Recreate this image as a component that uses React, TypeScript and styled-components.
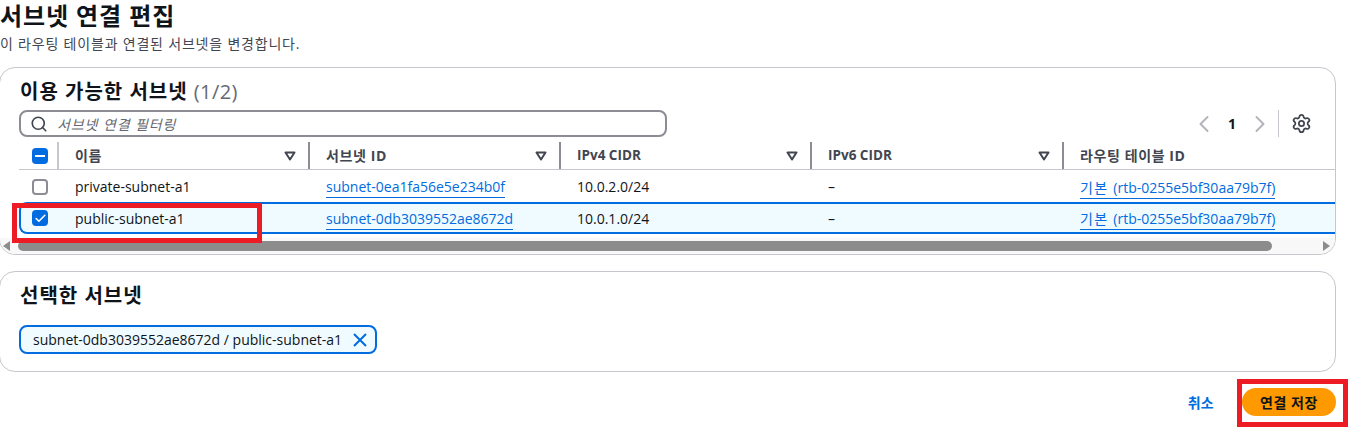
import styled, { createGlobalStyle } from "styled-components";
import { ChevronLeft, ChevronRight, Search, Settings, Check } from "lucide-react";

const GlobalStyle = createGlobalStyle`
  html, body { margin: 0; padding: 0; background: #fff; overflow: hidden; }
  body {
    font-family: "Open Sans", "Noto Sans CJK KR", sans-serif;
    font-size: 14px;
    color: #0f141a;
  }
`;

const Page = styled.div`
  position: relative;
  width: 1349px;
  height: 438px;
  overflow: hidden;
  padding: 1px 13px 0 0;
  box-sizing: border-box;
`;

const Title = styled.h1`
  margin: 0;
  font-size: 24px;
  line-height: 30px;
  font-weight: 700;
  letter-spacing: 0.9px;
`;

const Description = styled.p`
  margin: 4px 0 14px;
  font-size: 14px;
  line-height: 18px;
  letter-spacing: 0.8px;
  color: #424650;
`;

const Card = styled.section`
  margin-left: -1px;
  border: 1px solid #c6c6cd;
  border-radius: 16px;
  overflow: hidden;
  background: #fff;
  & + & { margin-top: 16px; }
`;

const CardHeading = styled.h2`
  margin: 0;
  padding: 11px 20px 0;
  font-size: 20px;
  line-height: 26px;
  font-weight: 700;
  letter-spacing: 1px;
`;

const Counter = styled.span`
  font-weight: 400;
  color: #656871;
  letter-spacing: 0.4px;
`;

const Toolbar = styled.div`
  display: flex;
  align-items: center;
  padding: 5px 23px 0 19px;
`;

const SearchBox = styled.div`
  width: 648px;
  height: 27px;
  box-sizing: border-box;
  border: 2px solid #8c8c94;
  border-radius: 8px;
  display: flex;
  align-items: center;
  gap: 9px;
  padding-left: 9px;
  color: #424650;
  font-size: 14px;
  font-style: italic;
`;

const Placeholder = styled.span`
  color: #656871;
  letter-spacing: 0.9px;
`;

const Pager = styled.div`
  margin-left: auto;
  display: flex;
  align-items: center;
  height: 27px;
  color: #b4b4bb;
`;

const PageNumber = styled.span`
  width: 28px;
  text-align: center;
  font-size: 14px;
  font-weight: 700;
  color: #0f141a;
`;

const PagerDivider = styled.span`
  width: 1px;
  height: 27px;
  background: #c6c6cd;
  margin: 0 12px 0 4px;
`;

const TableRow = styled.div<{ $selected?: boolean; $header?: boolean }>`
  display: grid;
  grid-template-columns: ${({ $selected }) => ($selected ? "38px" : "40px")} 251px 251px 251px 252px 272px;
  align-items: center;
  margin-left: 19px;
  box-sizing: border-box;
  height: ${({ $header }) => ($header ? "28px" : "32px")};
  margin-top: ${({ $header }) => ($header ? "5px" : "0")};
  padding-top: ${({ $header, $selected }) => ($header || $selected ? "0" : "1px")};
  border-bottom: ${({ $header }) => ($header ? "1px solid #c6c6cd" : "none")};
  ${({ $selected }) =>
    $selected &&
    `
    background: #f0fbff;
    border-top: 2px solid #006ce0;
    border-bottom: 2px solid #006ce0;
    border-left: 2px solid #006ce0;
    border-radius: 8px 0 0 8px;
  `}
`;

const CheckCell = styled.div<{ $selected?: boolean }>`
  display: flex;
  justify-content: flex-start;
  padding-left: ${({ $selected }) => ($selected ? "11px" : "13px")};
`;

const CheckBox = styled.span<{ $on?: boolean }>`
  width: 16px;
  height: 16px;
  box-sizing: border-box;
  border-radius: 4px;
  display: flex;
  align-items: center;
  justify-content: center;
  background: ${({ $on }) => ($on ? "#006ce0" : "#fff")};
  border: ${({ $on }) => ($on ? "none" : "2px solid #8c8c94")};
  color: #fff;
`;

const Dash = styled.span`
  width: 10px;
  height: 2px;
  background: #fff;
`;

const HeaderCell = styled.div`
  height: 27px;
  box-sizing: border-box;
  display: flex;
  align-items: center;
  justify-content: space-between;
  padding: 0 12px 0 16px;
  font-weight: 700;
  font-size: 13.5px;
  color: #424650;
  border-right: 2px solid #8c8c94;
`;

const HeaderLabel = styled.span<{ $wide?: boolean }>`
  font-size: ${({ $wide }) => ($wide ? "14px" : "13.5px")};
  letter-spacing: ${({ $wide }) => ($wide ? "0.6px" : "0")};
  padding-bottom: 2px;
`;

const SelectHeader = styled(CheckCell)`
  height: 27px;
  box-sizing: border-box;
  align-items: center;
  border-right: 2px solid #c6c6cd;
`;

const LastHeader = styled(HeaderCell)`
  border-right: none;
  justify-content: flex-start;
`;

const Cell = styled.div`
  padding-left: 16px;
  white-space: nowrap;
  font-size: 14px;
`;

const SubnetLink = styled.a`
  color: #006ce0;
  text-decoration: none;
  border-bottom: 1px solid #006ce0;
  padding-bottom: 1px;
`;

const LinkPrefix = styled.span`
  letter-spacing: 1.3px;
`;

const ScrollTrack = styled.div`
  display: flex;
  align-items: center;
  height: 16px;
  margin-top: 4px;
  background: #f8f8f8;
  padding: 0 5px 0 3px;
`;

const ScrollThumb = styled.div`
  width: 1254px;
  height: 10px;
  margin: 0 auto 0 8px;
  border-radius: 5px;
  background: #8c8c8c;
`;

const ScrollArrow = styled.svg`
  width: 7px;
  height: 10px;
  fill: #8c8c8c;
  flex: none;
`;

const TokenBox = styled.div`
  padding: 16px 19px 17px;
`;

const Token = styled.div`
  display: inline-flex;
  align-items: center;
  gap: 10px;
  height: 29px;
  box-sizing: border-box;
  border: 2px solid #006ce0;
  border-radius: 8px;
  background: #f0fbff;
  padding: 0 7px 0 12px;
  font-size: 14px;
`;

const Actions = styled.div`
  display: flex;
  align-items: center;
  justify-content: flex-end;
  gap: 28px;
  margin-top: 16px;
`;

const CancelLink = styled.a`
  color: #006ce0;
  font-weight: 700;
  font-size: 14px;
  letter-spacing: 0.3px;
`;

const SaveButton = styled.button`
  width: 94px;
  height: 28px;
  border: none;
  border-radius: 14px;
  background: #ff9900;
  color: #0f141a;
  font-family: inherit;
  font-size: 14px;
  font-weight: 700;
  letter-spacing: 0.6px;
  padding: 0;
`;

/* red annotation boxes drawn on top of the screenshot */
const Annotation = styled.div<{ $x: number; $y: number; $w: number; $h: number }>`
  position: absolute;
  left: ${({ $x }) => $x}px;
  top: ${({ $y }) => $y}px;
  width: ${({ $w }) => $w}px;
  height: ${({ $h }) => $h}px;
  box-sizing: border-box;
  border: 5px solid #ed1c24;
  pointer-events: none;
`;

const SortCaret = () => (
  <svg width="12" height="10" viewBox="0 0 12 10" aria-hidden="true">
    <path d="M1.5 1.5h9L6 8.5z" fill="none" stroke="#424650" strokeWidth="2" strokeLinejoin="round" />
  </svg>
);

const TokenClose = () => (
  <svg width="16" height="16" viewBox="0 0 16 16" aria-hidden="true">
    <path d="M2 2l12 12M14 2L2 14" fill="none" stroke="#006ce0" strokeWidth="2" />
  </svg>
);

const columns = [
  { label: "이름", wide: true },
  { label: "서브넷 ID", wide: true },
  { label: "IPv4 CIDR", wide: false },
  { label: "IPv6 CIDR", wide: false },
];

const rows = [
  { name: "private-subnet-a1", id: "subnet-0ea1fa56e5e234b0f", cidr: "10.0.2.0/24", selected: false },
  { name: "public-subnet-a1", id: "subnet-0db3039552ae8672d", cidr: "10.0.1.0/24", selected: true },
];

export default function App() {
  return (
    <Page>
      <GlobalStyle />
      <Title>서브넷 연결 편집</Title>
      <Description>이 라우팅 테이블과 연결된 서브넷을 변경합니다.</Description>

      <Card>
        <CardHeading>
          이용 가능한 서브넷 <Counter>(1/2)</Counter>
        </CardHeading>
        <Toolbar>
          <SearchBox>
            <Search size={18} strokeWidth={2.2} />
            <Placeholder>서브넷 연결 필터링</Placeholder>
          </SearchBox>
          <Pager>
            <ChevronLeft size={28} strokeWidth={1.7} />
            <PageNumber>1</PageNumber>
            <ChevronRight size={28} strokeWidth={1.7} />
            <PagerDivider />
            <Settings size={21} strokeWidth={2} color="#424650" />
          </Pager>
        </Toolbar>

        <TableRow $header>
          <SelectHeader>
            <CheckBox $on>
              <Dash />
            </CheckBox>
          </SelectHeader>
          {columns.map((col) => (
            <HeaderCell key={col.label}>
              <HeaderLabel $wide={col.wide}>{col.label}</HeaderLabel>
              <SortCaret />
            </HeaderCell>
          ))}
          <LastHeader>
            <HeaderLabel $wide>라우팅 테이블 ID</HeaderLabel>
          </LastHeader>
        </TableRow>

        {rows.map((row) => (
          <TableRow key={row.id} $selected={row.selected}>
            <CheckCell $selected={row.selected}>
              <CheckBox $on={row.selected}>{row.selected && <Check size={13} strokeWidth={3} />}</CheckBox>
            </CheckCell>
            <Cell>{row.name}</Cell>
            <Cell>
              <SubnetLink>{row.id}</SubnetLink>
            </Cell>
            <Cell>{row.cidr}</Cell>
            <Cell>–</Cell>
            <Cell>
              <SubnetLink>
                <LinkPrefix>기본 </LinkPrefix>(rtb-0255e5bf30aa79b7f)
              </SubnetLink>
            </Cell>
          </TableRow>
        ))}

        <ScrollTrack>
          <ScrollArrow viewBox="0 0 7 10">
            <path d="M7 0v10L0 5z" />
          </ScrollArrow>
          <ScrollThumb />
          <ScrollArrow viewBox="0 0 7 10">
            <path d="M0 0v10l7-5z" />
          </ScrollArrow>
        </ScrollTrack>
      </Card>

      <Card>
        <CardHeading>선택한 서브넷</CardHeading>
        <TokenBox>
          <Token>
            <span>subnet-0db3039552ae8672d / public-subnet-a1</span>
            <TokenClose />
          </Token>
        </TokenBox>
      </Card>

      <Actions>
        <CancelLink>취소</CancelLink>
        <SaveButton>연결 저장</SaveButton>
      </Actions>

      <Annotation $x={12} $y={203} $w={250} $h={40} />
      <Annotation $x={1237} $y={379} $w={111} $h={48} />
    </Page>
  );
}
